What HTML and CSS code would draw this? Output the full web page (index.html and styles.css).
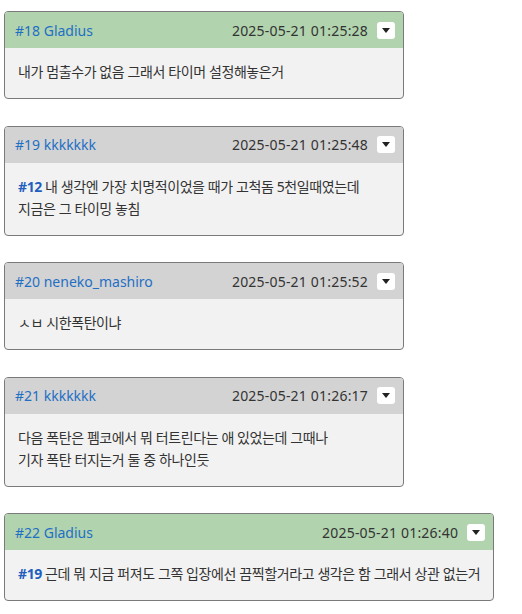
FILE: index.html
```html
<!DOCTYPE html>
<html lang="ko">
<head>
  <meta charset="UTF-8">
  <title>Comments</title>
  <link rel="stylesheet" href="styles.css">
</head>
<body>

  <div class="post">
    <div class="post-head mine">
      <a class="author" href="#">#18 Gladius</a>
      <span class="date">2025-05-21 01:25:28</span>
      <button class="menu"><span class="caret"></span></button>
    </div>
    <div class="post-body">내가 멈출수가 없음 그래서 타이머 설정해놓은거</div>
  </div>

  <div class="post">
    <div class="post-head">
      <a class="author" href="#">#19 kkkkkkk</a>
      <span class="date">2025-05-21 01:25:48</span>
      <button class="menu"><span class="caret"></span></button>
    </div>
    <div class="post-body"><a class="reply" href="#">#12</a> 내 생각엔 가장 치명적이었을 때가 고척돔 5천일때였는데<br>지금은 그 타이밍 놓침</div>
  </div>

  <div class="post">
    <div class="post-head">
      <a class="author" href="#">#20 neneko_mashiro</a>
      <span class="date">2025-05-21 01:25:52</span>
      <button class="menu"><span class="caret"></span></button>
    </div>
    <div class="post-body">ㅅㅂ 시한폭탄이냐</div>
  </div>

  <div class="post">
    <div class="post-head">
      <a class="author" href="#">#21 kkkkkkk</a>
      <span class="date">2025-05-21 01:26:17</span>
      <button class="menu"><span class="caret"></span></button>
    </div>
    <div class="post-body">다음 폭탄은 펨코에서 뭐 터트린다는 애 있었는데 그때나<br>기자 폭탄 터지는거 둘 중 하나인듯</div>
  </div>

  <div class="post">
    <div class="post-head mine">
      <a class="author" href="#">#22 Gladius</a>
      <span class="date">2025-05-21 01:26:40</span>
      <button class="menu"><span class="caret"></span></button>
    </div>
    <div class="post-body"><a class="reply" href="#">#19</a> 근데 뭐 지금 퍼져도 그쪽 입장에선 끔찍할거라고 생각은 함 그래서 상관 없는거</div>
  </div>

</body>
</html>
```

FILE: styles.css
```css
body {
  margin: 11px 4px;
  background-color: #fff;
  font-family: "Noto Sans", "Noto Sans CJK KR", sans-serif;
  font-size: 14px;
  color: #333;
}
.post {
  display: table;
  box-sizing: border-box;
  min-width: 400px;
  width: 400px;
  margin-bottom: 26.5px;
  border: 1px solid #7a7a7a;
  border-radius: 4px;
  overflow: hidden;
  background-color: #f2f2f2;
}
.post-head {
  display: flex;
  align-items: center;
  height: 36px;
  padding: 0 8px 0 10px;
  background-color: #d3d3d3;
}
.post-head.mine {
  background-color: #b1d3ae;
}
.author {
  flex: 1;
  color: #1f6fc5;
  text-decoration: none;
}
.date {
  color: #333;
  letter-spacing: 0.2px;
}
.menu {
  width: 18px;
  height: 17px;
  margin-left: 9px;
  padding: 0;
  border: none;
  border-radius: 3px;
  background-color: #fff;
  display: flex;
  align-items: center;
  justify-content: center;
}
.caret {
  width: 0;
  height: 0;
  border-left: 4px solid transparent;
  border-right: 4px solid transparent;
  border-top: 5px solid #222;
}
.post-body {
  padding: 13px 13px 15px;
  line-height: 22px;
  letter-spacing: -0.4px;
  white-space: nowrap;
}
.reply {
  color: #1f5fbf;
  font-weight: bold;
  text-decoration: none;
}
```
